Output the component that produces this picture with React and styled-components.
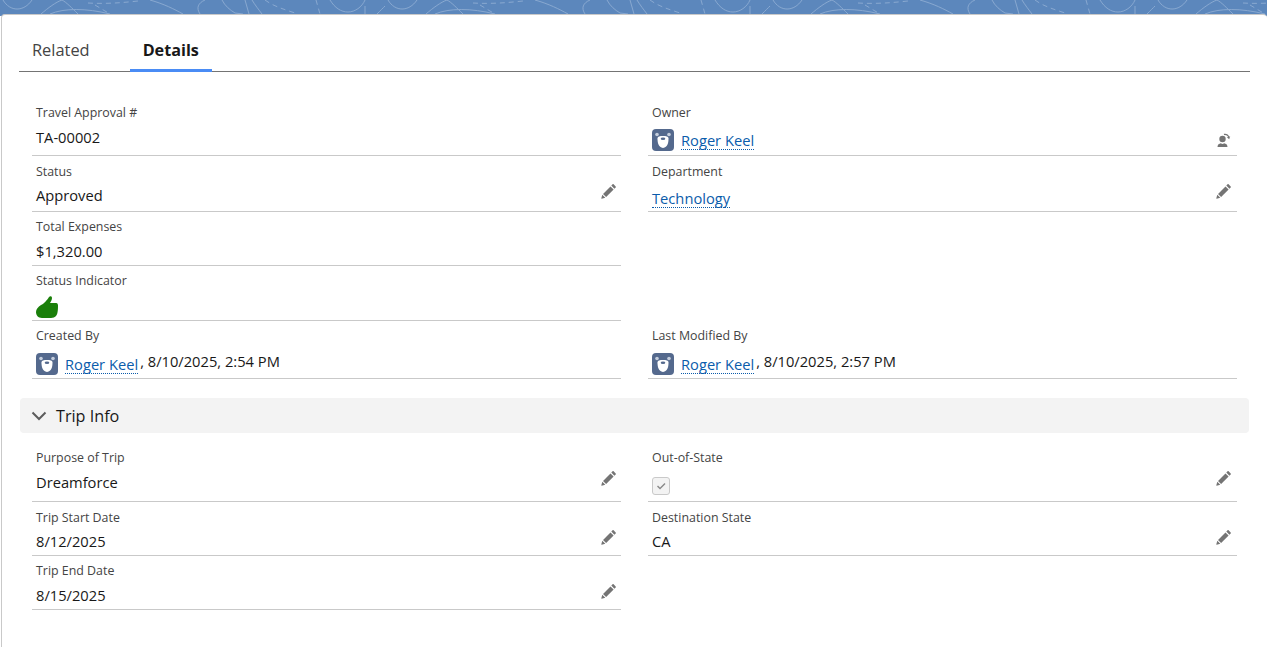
import React from 'react';
import styled, { createGlobalStyle } from 'styled-components';

const GlobalStyle = createGlobalStyle`
  html, body {
    margin: 0;
    padding: 0;
    height: 100%;
    overflow: hidden;
    background: #fff;
    font-family: "Open Sans", "Noto Sans", "Liberation Sans", sans-serif;
  }
`;

const Banner = styled.div`
  height: 16px;
  margin-bottom: -2px;
  background: #5c87bc;
  overflow: hidden;
  svg { display: block; }
`;

const Card = styled.div`
  position: relative;
  margin-left: 1px;
  height: 633px;
  background: #fff;
  border-top: 1px solid #c9c9c9;
  border-left: 1px solid #c9c9c9;
  border-radius: 4px 4px 0 0;
  box-sizing: border-box;
  padding: 0 17px;
`;

const Tabs = styled.div`
  display: flex;
  height: 56px;
  align-items: flex-end;
  border-bottom: 1px solid #747474;
`;

const Tab = styled.div`
  box-sizing: border-box;
  height: 37px;
  padding: 0 13px;
  margin-right: ${props => props.$gap || 0}px;
  font-size: ${props => (props.$active ? 16.2 : 16.4)}px;
  line-height: ${props => (props.$active ? 31 : 29)}px;
  font-weight: ${props => (props.$active ? 700 : 400)};
  color: ${props => (props.$active ? '#181818' : '#444')};
  border-bottom: 3px solid ${props => (props.$active ? '#4a8cf5' : 'transparent')};
  margin-bottom: -1px;
`;

const Grid = styled.div`
  display: grid;
  grid-template-columns: 589px 589px;
  column-gap: 27px;
  padding-left: 13px;
  margin-top: ${props => props.$top}px;
`;

const Cell = styled.div`
  position: relative;
  box-sizing: border-box;
  height: ${props => props.$h}px;
  border-bottom: ${props => (props.$empty ? 'none' : '1px solid #c9c9c9')};
  padding-left: 4px;
  padding-top: ${props => props.$pad || 0}px;
`;

const Label = styled.div`
  font-size: 12.4px;
  line-height: 16px;
  color: #444;
`;

const Value = styled.div`
  display: flex;
  align-items: center;
  font-size: 14.7px;
  line-height: 20px;
  color: #181818;
  margin-top: ${props => props.$mt}px;
`;

const NameLink = styled.span`
  color: #0b5cab;
  border-bottom: 1px dotted #0b5cab;
  line-height: 17px;
  margin-top: 2px;
`;

const Trailing = styled.span`
  margin-left: 2px;
  margin-bottom: 6px;
`;

const Avatar = styled.svg`
  width: 22px;
  height: 22px;
  margin-right: 7px;
  flex: none;
`;

const ActionIcon = styled.svg`
  position: absolute;
  right: ${props => props.$right}px;
  top: ${props => props.$top}px;
  width: 16px;
  height: 16px;
  fill: #747474;
`;

const Section = styled.div`
  display: flex;
  align-items: center;
  box-sizing: border-box;
  height: 35px;
  margin: 19px 0 0 1px;
  width: 1229px;
  background: #f3f3f3;
  border-radius: 4px;
  padding: 1px 0 0 11px;
  font-size: 16.2px;
  color: #181818;
`;

const Chevron = styled.svg`
  width: 16px;
  height: 16px;
  margin-right: 9px;
  fill: none;
  stroke: #5c5c5c;
  stroke-width: 2;
`;

const CheckBox = styled.span`
  display: flex;
  align-items: center;
  justify-content: center;
  box-sizing: border-box;
  width: 18px;
  height: 18px;
  background: #f3f3f3;
  border: 1px solid #c9c9c9;
  border-radius: 3px;
  svg { width: 10px; height: 10px; fill: #8a8a8a; }
`;

const ThumbIcon = styled.svg`
  width: 22px;
  height: 22px;
  fill: #1a7f0a;
  display: block;
`;

const Bear = () => (
  <Avatar viewBox="0 0 22 22">
    <rect width="22" height="22" rx="4" fill="#54698d" />
    <circle cx="5" cy="5.500" r="1.800" fill="#c5cedd" />
    <circle cx="17" cy="5.500" r="1.800" fill="#c5cedd" />
    <path d="M5.500 9.500c0-2 2.500-2.500 5.500-2.500s5.500.5 5.500 2.500c0 4-.8 9-5.500 9.500-4.700-.5-5.500-5.500-5.500-9.500z" fill="#fff" />
    <ellipse cx="11" cy="9.800" rx="2.300" ry="1.300" fill="#54698d" />
  </Avatar>
);

const Pencil = ({ top, right = 5 }) => (
  <ActionIcon $top={top} $right={right} viewBox="0 0 16 16">
    <path d="M11.600 1.300c.3-.3.700-.3 1 0l2.100 2.100c.3.300.3.700 0 1l-1.300 1.300-3.100-3.100zM9.500 3.400l3.100 3.100-7.500 7.500-3.100-3.100zM1.300 11.700l3 3-3.600 1c-.3 0-.5-.2-.4-.5z" />
  </ActionIcon>
);

const ChangeOwner = ({ top }) => (
  <ActionIcon $top={top} $right={5} viewBox="0 0 16 16">
    <circle cx="6.500" cy="7" r="3.200" />
    <path d="M1.500 15c0-2.600 1.500-3.400 3.400-3.800.6.500 1 .7 1.600.7s1-.2 1.600-.7c1.900.4 3.400 1.200 3.400 3.800z" />
    <path d="M7.800 1.800c2.600-.6 4.700.6 5.400 3l1-.7-1 3.200-2.300-2.100 1.200-.1c-.6-1.500-2.300-2.300-4-1.900z" />
  </ActionIcon>
);

const person = name => (
  <>
    <Bear />
    <NameLink>{name}</NameLink>
  </>
);

const App = () => (
  <>
    <GlobalStyle />
    <Banner>
      <svg width="1267" height="14" fill="none">
        <defs>
          <pattern id="topo" width="385" height="14" patternUnits="userSpaceOnUse">
            <g stroke="#88a8d0" strokeWidth="1">
              <path d="M3 0C10 12 24 12 32 0M41 14C48 8 56 2 62 0c4 2 10 8 16 14M50 14c14-6 36-6 60 0" />
              <path d="M150 0c14 4 24 9 33 14M200 14c-4-6-2-11 5-14M222 0c3 6 8 10 13 13l8 1M245 0l4 14M252 0c3 5 7 10 10 14" />
              <path d="M330 0c5 8 11 12 18 12s14-5 17-12M365 6v8" />
              <path d="M88 3c16 1 32 0 50-2M95 5l15 9M265 0c8 6 18 9 30 13M316 0l4 14" strokeDasharray="5 4" />
              <path d="M377 14c4-4 6-6 8-8" />
            </g>
          </pattern>
        </defs>
        <rect width="1267" height="14" fill="url(#topo)" />
      </svg>
    </Banner>
    <Card>
      <Tabs>
        <Tab $gap={27}>Related</Tab>
        <Tab $active>Details</Tab>
      </Tabs>
      <Grid $top={29}>
        <Cell $h={55} $pad={4}>
          <Label>Travel Approval #</Label>
          <Value $mt={6}>TA-00002</Value>
        </Cell>
        <Cell $h={55} $pad={4}>
          <Label>Owner</Label>
          <Value $mt={8}>{person('Roger Keel')}</Value>
          <ChangeOwner top={31} />
        </Cell>
        <Cell $h={56} $pad={8}>
          <Label>Status</Label>
          <Value $mt={5}>Approved</Value>
          <Pencil top={27} right={4} />
        </Cell>
        <Cell $h={56} $pad={8}>
          <Label>Department</Label>
          <Value $mt={8}>
            <NameLink>Technology</NameLink>
          </Value>
          <Pencil top={27} />
        </Cell>
        <Cell $h={54} $pad={7}>
          <Label>Total Expenses</Label>
          <Value $mt={6}>$1,320.00</Value>
        </Cell>
        <Cell $h={54} $empty />
        <Cell $h={55} $pad={7}>
          <Label>Status Indicator</Label>
          <Value $mt={7}>
            <ThumbIcon viewBox="0 0 22 22">
              <path d="M0 16c0-3 2-5 5-7 3-1 6-5 8-8 1-1 3-1 3 1 0 2-1 3-2 5h6c2 0 2 2 2 3 0 2 0 8-2 10-1 1-3 2-5 2H6c-4 0-6-3-6-6z" />
            </ThumbIcon>
          </Value>
        </Cell>
        <Cell $h={55} $empty />
        <Cell $h={58} $pad={7}>
          <Label>Created By</Label>
          <Value $mt={7}>
            {person('Roger Keel')}
            <Trailing>, 8/10/2025, 2:54 PM</Trailing>
          </Value>
        </Cell>
        <Cell $h={58} $pad={7}>
          <Label>Last Modified By</Label>
          <Value $mt={7}>
            {person('Roger Keel')}
            <Trailing>, 8/10/2025, 2:57 PM</Trailing>
          </Value>
        </Cell>
      </Grid>
      <Section>
        <Chevron viewBox="0 0 16 16">
          <path d="M1.500 4.500L8 11l6.500-6.500" />
        </Chevron>
        Trip Info
      </Section>
      <Grid $top={14}>
        <Cell $h={55} $pad={3}>
          <Label>Purpose of Trip</Label>
          <Value $mt={6}>Dreamforce</Value>
          <Pencil top={23} right={4} />
        </Cell>
        <Cell $h={55} $pad={3}>
          <Label>Out-of-State</Label>
          <Value $mt={11}>
            <CheckBox>
              <svg viewBox="0 0 10 10">
                <path d="M1 5.500l1-1 2 2 4.500-4.500 1 1-5.500 5.500z" />
              </svg>
            </CheckBox>
          </Value>
          <Pencil top={23} />
        </Cell>
        <Cell $h={54} $pad={8}>
          <Label>Trip Start Date</Label>
          <Value $mt={5}>8/12/2025</Value>
          <Pencil top={27} right={4} />
        </Cell>
        <Cell $h={54} $pad={8}>
          <Label>Destination State</Label>
          <Value $mt={5}>CA</Value>
          <Pencil top={27} />
        </Cell>
        <Cell $h={54} $pad={7}>
          <Label>Trip End Date</Label>
          <Value $mt={6}>8/15/2025</Value>
          <Pencil top={27} right={4} />
        </Cell>
        <Cell $h={54} $empty />
      </Grid>
    </Card>
  </>
);

export default App;
